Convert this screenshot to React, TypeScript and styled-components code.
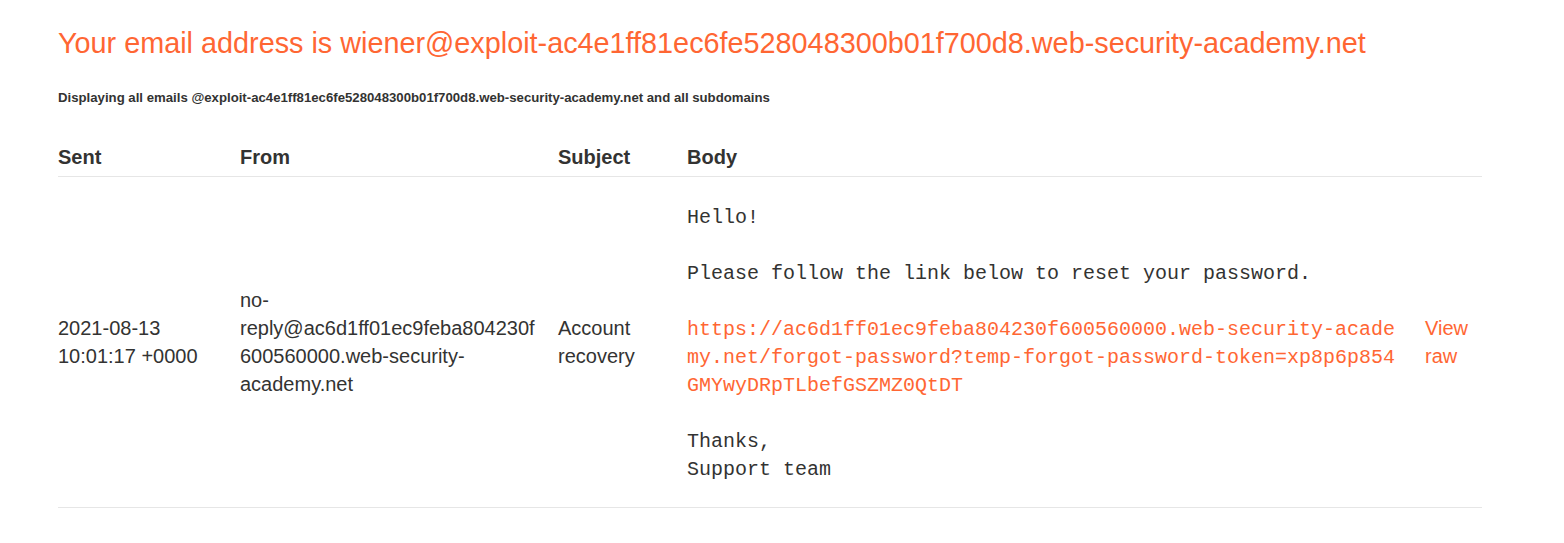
import React from "react";
import styled, { createGlobalStyle } from "styled-components";

const GlobalStyle = createGlobalStyle`
  body {
    margin: 0;
    background: #fff;
    font-family: "Liberation Sans", Arial, sans-serif;
    color: #333332;
  }
`;

const Page = styled.div`
  padding: 24px 82px 40px 58px;
`;

const Heading = styled.h1`
  margin: 0;
  font-size: 28.8px;
  line-height: 38px;
  font-weight: normal;
  color: #ff6633;
  white-space: nowrap;
`;

const Subtitle = styled.h4`
  margin: 27px 0 0;
  font-size: 13.2px;
  line-height: 18px;
  font-weight: bold;
  color: #333332;
`;

const Table = styled.table`
  margin-top: 36px;
  width: 1424px;
  table-layout: fixed;
  border-collapse: collapse;
  font-size: 20px;
  line-height: 28px;
`;

const HeadCell = styled.th`
  text-align: left;
  font-weight: bold;
  padding: 0 20px 5px 0;
  border-bottom: 1px solid #e6e6e6;
`;

const Cell = styled.td<{ $wrap?: boolean }>`
  padding: 0 20px 0 0;
  vertical-align: middle;
  border-bottom: 1px solid #e6e6e6;
  overflow-wrap: ${(p) => (p.$wrap ? "break-word" : "normal")};
`;

const Body = styled.pre`
  margin: 27px 0 23px;
  font-family: "Liberation Mono", "Courier New", monospace;
  font-size: 20px;
  line-height: 28px;
  white-space: pre-wrap;
  word-break: break-all;
  color: #333332;
`;

const Link = styled.a`
  color: #ff6633;
  text-decoration: none;
`;

const RawLink = styled.a`
  color: #ff6633;
  text-decoration: none;
`;

const url =
  "https://ac6d1ff01ec9feba804230f600560000.web-security-academy.net/forgot-password?temp-forgot-password-token=xp8p6p854GMYwyDRpTLbefGSZMZ0QtDT";

export default function App() {
  return (
    <>
      <GlobalStyle />
      <Page>
        <Heading>
          Your email address is wiener@exploit-ac4e1ff81ec6fe528048300b01f700d8.web-security-academy.net
        </Heading>
        <Subtitle>
          Displaying all emails @exploit-ac4e1ff81ec6fe528048300b01f700d8.web-security-academy.net and all subdomains
        </Subtitle>
        <Table>
          <colgroup>
            <col style={{ width: 182 }} />
            <col style={{ width: 318 }} />
            <col style={{ width: 129 }} />
            <col style={{ width: 738 }} />
            <col style={{ width: 57 }} />
          </colgroup>
          <thead>
            <tr>
              <HeadCell>Sent</HeadCell>
              <HeadCell>From</HeadCell>
              <HeadCell>Subject</HeadCell>
              <HeadCell>Body</HeadCell>
              <HeadCell />
            </tr>
          </thead>
          <tbody>
            <tr>
              <Cell>2021-08-13 10:01:17 +0000</Cell>
              <Cell $wrap>no-reply@ac6d1ff01ec9feba804230f600560000.web-security-academy.net</Cell>
              <Cell>Account recovery</Cell>
              <Cell>
                <Body>
                  {"Hello!\n\nPlease follow the link below to reset your password.\n\n"}
                  <Link href="#">{url}</Link>
                  {"\n\nThanks,\nSupport team"}
                </Body>
              </Cell>
              <Cell>
                <RawLink href="#">View raw</RawLink>
              </Cell>
            </tr>
          </tbody>
        </Table>
      </Page>
    </>
  );
}
